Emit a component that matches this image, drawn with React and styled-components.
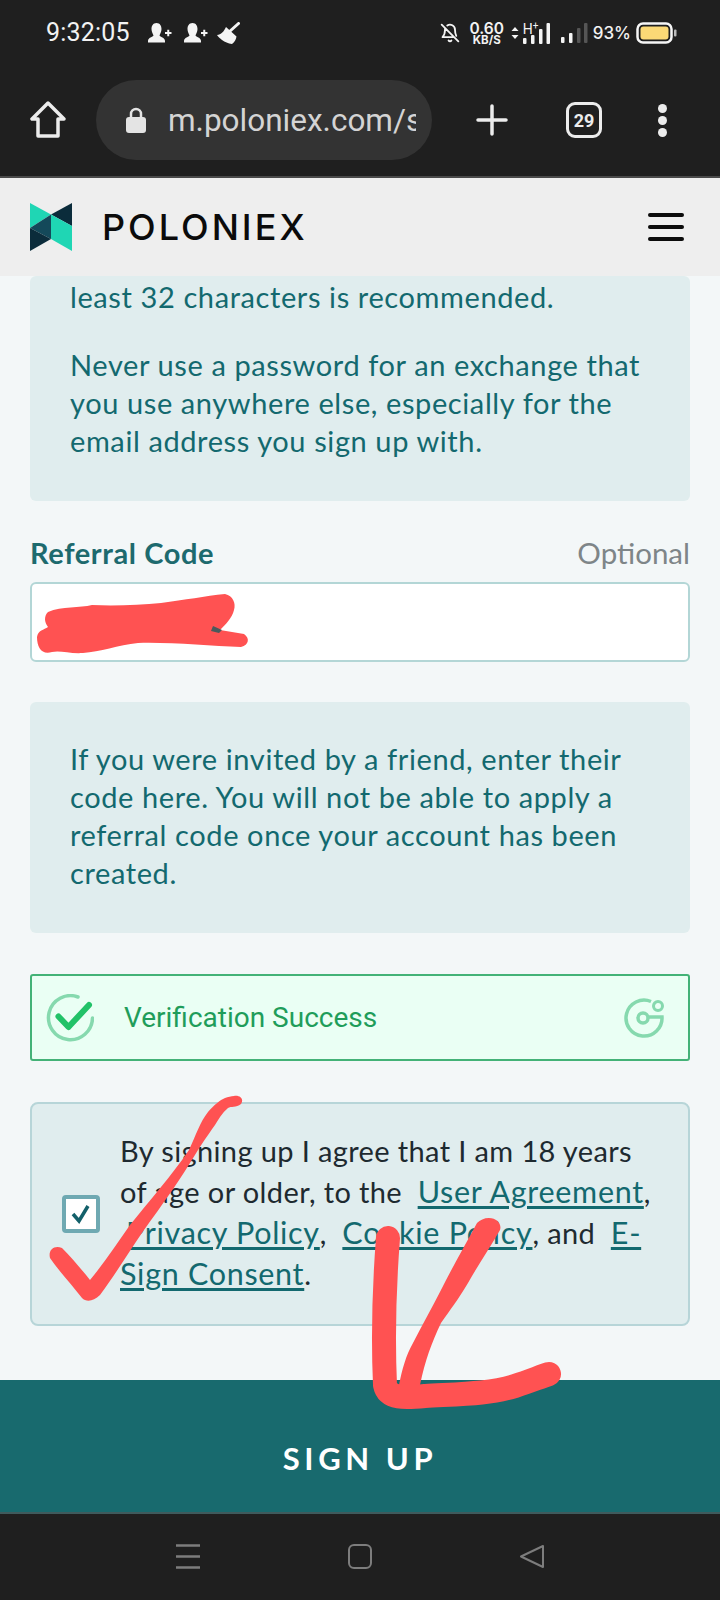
import React from "react";
import styled, { createGlobalStyle } from "styled-components";

const Global = createGlobalStyle`
  html, body { margin: 0; padding: 0; background: #1f1f1f; }
  * { box-sizing: border-box; }
`;

const Phone = styled.div`
  position: relative;
  width: 720px;
  height: 1600px;
  overflow: hidden;
  display: flex;
  flex-direction: column;
  background: #f3f7f8;
  font-family: Lato, "Open Sans", sans-serif;
`;

const StatusBar = styled.div`
  height: 80px;
  flex: none;
  background: #1f1f1f;
  color: #f2f2f2;
  display: flex;
  align-items: flex-start;
  justify-content: space-between;
  padding: 21px 43px 0 46px;
  font-family: Roboto, sans-serif;
`;

const StatusGroup = styled.div`
  display: flex;
  align-items: center;
  height: 24px;
  gap: ${(p) => p.$gap || 0}px;
`;

const Clock = styled.span`
  font-size: 25px;
  letter-spacing: 0.2px;
  margin-right: 6px;
  line-height: 24px;
`;

const Speed = styled.div`
  display: flex;
  flex-direction: column;
  align-items: center;
  font-family: Inter, sans-serif;
  width: 36px;
  margin: 1px 0 0 9px;
  b { font-size: 15.5px; font-weight: 600; line-height: 13px; }
  i { font-size: 11.5px; font-weight: 700; font-style: normal; line-height: 11px; }
`;

const NetType = styled.div`
  position: relative;
  width: 29px;
  height: 24px;
  margin-left: 3px;
  span {
    position: absolute;
    left: 1px;
    top: 1px;
    font-size: 14px;
    line-height: 14px;
    font-family: Roboto, sans-serif;
  }
  sup {
    position: absolute;
    left: 11px;
    top: 0;
    font-size: 10px;
    line-height: 10px;
    margin: 0;
  }
`;

const Battery = styled.span`
  font-family: Inter, sans-serif;
  font-size: 17px;
  font-weight: 500;
  margin: 0 5px;
`;

const BrowserBar = styled.div`
  height: 98px;
  flex: none;
  background: #1f1f1f;
  border-bottom: 2px solid #4a4a4a;
  display: flex;
  align-items: flex-start;
  padding: 0 0 0 30px;
  color: #ececec;
`;

const HomeSlot = styled.div`
  width: 66px;
  padding-top: 21px;
  height: 80px;
`;

const UrlPill = styled.div`
  width: 336px;
  height: 80px;
  border-radius: 40px;
  background: #333333;
  display: flex;
  align-items: center;
  padding: 0 16px 0 29px;
  flex: none;
`;

const UrlText = styled.span`
  font-family: Roboto, sans-serif;
  font-size: 31.5px;
  color: #d4d4d4;
  margin-left: 21px;
  white-space: nowrap;
  overflow: hidden;
  flex: 1;
`;

const BrowserActions = styled.div`
  display: flex;
  align-items: center;
  height: 80px;
  margin-left: 44px;
`;

const TabCount = styled.div`
  width: 36px;
  height: 36px;
  border: 3.5px solid #ececec;
  border-radius: 9px;
  margin-left: 58px;
  margin-right: 56px;
  display: flex;
  align-items: center;
  justify-content: center;
  font-family: Roboto, sans-serif;
  font-size: 18px;
  font-weight: 700;
`;

const Dots = styled.div`
  display: flex;
  flex-direction: column;
  gap: 3px;
  span { width: 9px; height: 9px; border-radius: 50%; background: #ececec; }
`;

const SiteHeader = styled.header`
  height: 98px;
  flex: none;
  background: #eeeeee;
  display: flex;
  align-items: center;
  padding: 0 36px 0 30px;
`;

const Wordmark = styled.div`
  font-family: Inter, sans-serif;
  font-size: 36px;
  font-weight: 500;
  letter-spacing: 3px;
  color: #0b0b0b;
  margin-left: 30px;
  flex: 1;
`;

const Burger = styled.div`
  width: 36px;
  display: flex;
  flex-direction: column;
  gap: 8px;
  span { height: 4px; border-radius: 2px; background: #0b0b0b; }
`;

const Content = styled.main`
  flex: 1;
  padding: 0 30px;
  display: flex;
  flex-direction: column;
`;

const Note = styled.div`
  background: #e0edee;
  border-radius: 6px;
  color: #13696f;
  font-size: 29px;
  letter-spacing: 0.6px;
  line-height: 38px;
  padding: ${(p) => p.$pad};
  p { margin: 0; }
  p + p { margin-top: 30px; }
`;

const FieldHead = styled.div`
  display: flex;
  align-items: center;
  justify-content: space-between;
  margin-top: 33px;
  height: 36px;
`;

const FieldLabel = styled.span`
  font-size: 29px;
  font-weight: 700;
  letter-spacing: 0.6px;
  color: #1d6a6e;
`;

const Optional = styled.span`
  font-size: 29.5px;
  color: #7e8588;
`;

const Input = styled.div`
  height: 80px;
  margin: 12px 0 40px;
  background: #fff;
  border: 2px solid #b3d6d6;
  border-radius: 6px;
`;

const Captcha = styled.div`
  height: 87px;
  margin: 41px 0;
  background: #eafff4;
  border: 2px solid #43b277;
  border-radius: 3px;
  display: flex;
  align-items: center;
  padding: 0 24px 0 14px;
`;

const CaptchaText = styled.span`
  font-family: Roboto, sans-serif;
  font-size: 28px;
  color: #1f9d5a;
  margin-left: 30px;
  flex: 1;
`;

const Agreement = styled.div`
  height: 224px;
  background: #e0edee;
  border: 2px solid #b7d5d8;
  border-radius: 8px;
  display: flex;
  align-items: center;
  padding: 0 24px 0 30px;
`;

const CheckBox = styled.div`
  width: 38px;
  height: 38px;
  flex: none;
  background: #fff;
  border: 4px solid #6fa9b2;
  border-radius: 4px;
  margin-right: 20px;
  display: flex;
  align-items: center;
  justify-content: center;
`;

const AgreeText = styled.p`
  margin: 0 0 4px;
  font-size: 29px;
  letter-spacing: 0.38px;
  line-height: 41px;
  color: #1e2a30;
`;

const Link = styled.a`
  color: #13696f;
  font-size: 30.5px;
  letter-spacing: 0.7px;
  margin-left: ${(p) => p.$lead || 0}px;
  text-decoration: underline;
  text-decoration-thickness: 3px;
  text-underline-offset: 3px;
`;

const SignUp = styled.button`
  height: 134px;
  flex: none;
  border: 0;
  border-bottom: 2px solid #3f5a5c;
  background: #186a6e;
  color: #fff;
  padding: 24px 0 0;
  font-family: Lato, sans-serif;
  font-size: 31px;
  font-weight: 700;
  letter-spacing: 4.6px;
`;

const NavBar = styled.nav`
  height: 86px;
  flex: none;
  background: #1f1f1f;
  display: flex;
  justify-content: space-between;
  padding: 30px 176px 0;
`;

const Scribbles = styled.svg`
  position: absolute;
  inset: 0;
  pointer-events: none;
`;

const PersonPlus = () => (
  <svg width="24" height="20" viewBox="0 0 24 20">
    <path fill="#f4f4f4" d="M8.500 0C12 0 13.500 3 13.500 6C13.500 9 12 11 11.500 12.500C12 14 17 14.500 17 18V19.500H0V18C0 14.500 5 14 5.500 12.500C5 11 3.500 9 3.500 6C3.500 3 5 0 8.500 0Z" />
    <path stroke="#f4f4f4" strokeWidth="2" d="M17 10h6.500M20.250 6.750v6.500" />
  </svg>
);

const Broom = () => (
  <svg width="23" height="22" viewBox="0 0 23 22" style={{ marginLeft: -3 }}>
    <path stroke="#f4f4f4" strokeWidth="3" strokeLinecap="round" d="M12 10L21.500 1.500" />
    <path fill="#f4f4f4" d="M9 5L19.500 14.500C19 17.500 17.500 20 15 22C11 21.500 8 20 5 18C3 16.500 1.500 15 0 13C4 12.500 7 9.500 9 5Z" />
  </svg>
);

const Bars = ({ dim }) => (
  <svg width="27" height="20" viewBox="0 0 27 20">
    {[
      [0, 14, 6],
      [8, 10, 10],
      [16, 5, 15],
      [23, 0, 20],
    ].map(([x, y, h], i) => (
      <rect key={i} x={x} y={y} width="3.500" height={h} rx="1" fill={dim && i > 1 ? "#555" : "#f4f4f4"} />
    ))}
  </svg>
);

const Logo = () => (
  <svg width="42" height="48" viewBox="0 0 42 48">
    <path fill="#1fd6b4" d="M0 0L21 11.500 0 25z" />
    <path fill="#0b2c3b" d="M42 0L21 11.500 42 23z" />
    <path fill="#14495a" d="M0 25L21 11.500V36z" />
    <path fill="#1fd6b4" d="M21 11.500L42 23V48L21 36z" />
    <path fill="#0b2c3b" d="M0 25L21 36 0 48z" />
  </svg>
);

export default function App() {
  return (
    <Phone>
      <Global />
      <StatusBar>
        <StatusGroup $gap={12}>
          <Clock>9:32:05</Clock>
          <PersonPlus />
          <PersonPlus />
          <Broom />
        </StatusGroup>
        <StatusGroup>
          <svg width="20" height="22" viewBox="0 0 24 24" fill="none" stroke="#f4f4f4" strokeWidth="2.200" strokeLinecap="round" strokeLinejoin="round">
            <path d="M8.700 3A6 6 0 0 1 18 8c0 3 .5 5.500 1.500 7.500M6.200 6.200C6 7 6 7.500 6 8c0 6-3 9-3 9h14M10.300 21a2 2 0 0 0 3.400 0M2 2l20 20" />
          </svg>
          <Speed>
            <b>0.60</b>
            <i>KB/S</i>
          </Speed>
          <svg width="8" height="12" viewBox="0 0 8 12" style={{ marginLeft: 6 }}>
            <path fill="#f4f4f4" d="M4 0l3.500 4h-7zM4 12L.5 8h7z" />
          </svg>
          <NetType>
            <span>H</span>
            <sup>+</sup>
            <svg width="29" height="24" viewBox="0 0 29 24">
              <rect x="1" y="17" width="3.500" height="6" rx="1" fill="#f4f4f4" />
              <rect x="9" y="14" width="3.500" height="9" rx="1" fill="#f4f4f4" />
              <rect x="17" y="8" width="3.500" height="15" rx="1" fill="#f4f4f4" />
              <rect x="24.500" y="2" width="3.500" height="21" rx="1" fill="#f4f4f4" />
            </svg>
          </NetType>
          <span style={{ width: 10 }} />
          <Bars dim />
          <Battery>93%</Battery>
          <svg width="41" height="22" viewBox="0 0 41 22">
            <rect x="1.500" y="1.500" width="34" height="19" rx="5.500" fill="none" stroke="#f6f6f6" strokeWidth="2.500" />
            <rect x="4.500" y="4.500" width="28" height="13" rx="3" fill="#fbd976" />
            <rect x="38" y="7.500" width="2.500" height="7" rx="1" fill="#bbb" />
          </svg>
        </StatusGroup>
      </StatusBar>

      <BrowserBar>
        <HomeSlot>
          <svg width="36" height="37" viewBox="0 0 36 37" fill="none" stroke="#ececec" strokeWidth="3.500" strokeLinejoin="round">
            <path d="M18 2L2 18h6v17h20V18h6z" />
          </svg>
        </HomeSlot>
        <UrlPill>
          <svg width="22" height="26" viewBox="0 0 22 26">
            <path fill="none" stroke="#e4e4e4" strokeWidth="2.500" d="M6 11V7a5 5 0 0 1 10 0v4" />
            <rect x="1" y="10" width="20" height="16" rx="3" fill="#e4e4e4" />
          </svg>
          <UrlText>m.poloniex.com/s</UrlText>
        </UrlPill>
        <BrowserActions>
          <svg width="32" height="32" viewBox="0 0 32 32" stroke="#ececec" strokeWidth="3.500" strokeLinecap="round">
            <path d="M2 16h28M16 2v28" />
          </svg>
          <TabCount>29</TabCount>
          <Dots>
            <span />
            <span />
            <span />
          </Dots>
        </BrowserActions>
      </BrowserBar>

      <SiteHeader>
        <Logo />
        <Wordmark>POLONIEX</Wordmark>
        <Burger>
          <span />
          <span />
          <span />
        </Burger>
      </SiteHeader>

      <Content>
        <Note $pad="2px 40px 41px">
          <p>least 32 characters is recommended.</p>
          <p>Never use a password for an exchange that you use anywhere else, especially for the email address you sign up with.</p>
        </Note>
        <FieldHead>
          <FieldLabel>Referral Code</FieldLabel>
          <Optional>Optional</Optional>
        </FieldHead>
        <Input />
        <Note $pad="38px 40px 41px">
          <p>If you were invited by a friend, enter their code here. You will not be able to apply a referral code once your account has been created.</p>
        </Note>
        <Captcha>
          <svg width="48" height="48" viewBox="0 0 48 48" fill="none">
            <path d="M32 3A22 22 0 1 0 46.500 24" stroke="#86d9ae" strokeWidth="3.500" strokeLinecap="round" />
            <path d="M12.500 22.500L22.500 33L43 11" stroke="#22c268" strokeWidth="6" strokeLinecap="round" strokeLinejoin="round" />
          </svg>
          <CaptchaText>Verification Success</CaptchaText>
          <svg width="40" height="40" viewBox="0 0 40 40" fill="none" stroke="#86d9ae">
            <path d="M27 3.500A18 18 0 1 0 38 19H25" strokeWidth="3.500" />
            <circle cx="19" cy="20" r="5" strokeWidth="3.500" />
            <circle cx="34" cy="8" r="4.500" strokeWidth="3" />
          </svg>
        </Captcha>
        <Agreement>
          <CheckBox>
            <svg width="22" height="22" viewBox="0 0 22 22" fill="none" stroke="#13606a" strokeWidth="3.500">
              <path d="M3 11l6 7L18 3" />
            </svg>
          </CheckBox>
          <AgreeText>
            By signing up I agree that I am 18 years of age or older, to the {"\u00a0"}<Link>User Agreement</Link>, <Link $lead={6}>Privacy Policy</Link>, {"\u00a0"}<Link>Cookie Policy</Link>, and {"\u00a0"}<Link>E-Sign Consent</Link>.
          </AgreeText>
        </Agreement>
      </Content>

      <SignUp>SIGN UP</SignUp>
      <NavBar>
        <svg width="24" height="25" viewBox="0 0 24 25" stroke="#7d7d7d" strokeWidth="2.500">
          <path d="M0 1.500h24M0 12.500h24M0 23.500h24" />
        </svg>
        <svg width="24" height="25" viewBox="0 0 24 25" fill="none" stroke="#7d7d7d" strokeWidth="2">
          <rect x="1" y="1" width="22" height="23" rx="5" />
        </svg>
        <svg width="24" height="25" viewBox="0 0 24 25" fill="none" stroke="#7d7d7d" strokeWidth="2" strokeLinejoin="round">
          <path d="M23 2v21L1 12.500z" />
        </svg>
      </NavBar>

      <Scribbles width="720" height="1600" viewBox="0 0 720 1600">
        <path fill="#ff5252" d="M48 612C62 606 80 608 92 605C115 606 140 605 161 603C185 600 205 596 225 594C233 596 236 603 234 610C232 618 226 624 220 630L244 634C250 638 249 645 241 647C210 646 170 642 138 643C118 645 100 652 83 653C70 654 60 650 52 652C42 655 37 648 37 637C38 630 44 630 48 627C44 622 44 616 48 612Z" />
        <path fill="#4a5a5c" d="M213 626l9 4-3 3-8-2z" />
        <path fill="#ff5252" d="M234 1096C241 1095 244 1100 241 1104C236 1108 231 1106 228 1108C222 1113 218 1120 215 1125C208 1135 203 1142 198 1150C180 1180 162 1205 144 1230C130 1250 115 1275 100 1295C93 1302 86 1302 82 1298C72 1285 58 1270 50 1258C48 1250 54 1245 62 1248C72 1258 82 1270 90 1280C105 1262 118 1242 130 1225C150 1200 172 1175 189 1150C196 1135 200 1122 208 1112C214 1105 220 1100 225 1098C228 1097 231 1096 234 1096Z" />
        <path fill="none" stroke="#ff5252" strokeWidth="24" strokeLinecap="round" strokeLinejoin="round" d="M388 1238C384 1290 383 1340 385 1385C388 1399 405 1398 425 1396C460 1394 490 1394 515 1386C530 1381 540 1377 549 1374" />
        <path fill="#ff5252" d="M489 1218C497 1218 502 1224 500 1230C490 1248 478 1265 468 1283C458 1300 450 1310 441 1323C432 1342 425 1360 420 1385L399 1385C402 1370 406 1355 413 1343C422 1325 432 1308 441 1290C452 1268 465 1245 477 1223C480 1220 484 1218 489 1218Z" />
      </Scribbles>
    </Phone>
  );
}
